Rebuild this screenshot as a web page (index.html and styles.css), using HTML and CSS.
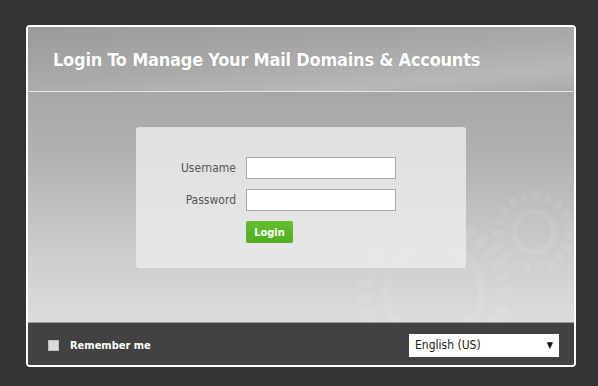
FILE: index.html
```html
<!DOCTYPE html>
<html>
<head>
<meta charset="utf-8">
<link rel="stylesheet" href="styles.css">
</head>
<body>
<div class="card">
  <div class="header">
    <h1 class="title">Login To Manage Your Mail Domains &amp; Accounts</h1>
  </div>
  <div class="body">
    <svg class="gears" width="230" height="150" viewBox="0 0 230 150">
      <g fill="none" stroke="#ffffff" stroke-opacity="0.08">
        <circle cx="90" cy="120" r="70" stroke-width="14" stroke-dasharray="8 6"/>
        <circle cx="90" cy="120" r="48" stroke-width="8"/>
        <circle cx="190" cy="60" r="36" stroke-width="10" stroke-dasharray="7 5"/>
        <circle cx="190" cy="60" r="20" stroke-width="6"/>
      </g>
    </svg>
    <div class="panel">
      <div class="row">
        <label class="label">Username</label>
        <input class="field" type="text">
      </div>
      <div class="row">
        <label class="label">Password</label>
        <input class="field" type="password">
      </div>
      <div class="row">
        <span class="label"></span>
        <button class="btn">Login</button>
      </div>
    </div>
  </div>
  <div class="footer">
    <label class="remember"><span class="check"></span>Remember me</label>
    <div class="select"><span>English (US)</span><span class="arrow">▼</span></div>
  </div>
</div>
</body>
</html>
```
FILE: styles.css
```css
html, body {
  margin: 0;
  padding: 0;
  background: #333333;
  font-family: "DejaVu Sans", "Liberation Sans", sans-serif;
}
body {
  padding: 25px 22px 0 26px;
}
.card {
  width: 546px;
  height: 338px;
  border: 2px solid #ffffff;
  border-radius: 4px;
  overflow: hidden;
  display: flex;
  flex-direction: column;
  background: #444;
}
.header {
  height: 64px;
  flex: none;
  border-bottom: 1px solid #e6e6e6;
  background: linear-gradient(175deg, #9a9a9a 0%, #a9a9a9 50%, #b8b8b8 80%, #aaaaaa 100%);
  display: flex;
  align-items: center;
  padding-left: 25px;
}
.title {
  margin: 0;
  color: #ffffff;
  font-family: "DejaVu Sans Condensed", "DejaVu Sans", sans-serif;
  font-weight: bold;
  font-size: 18px;
  letter-spacing: -0.22px;
  text-shadow: 0 0 1px rgba(0,0,0,0.15);
  padding-top: 0;
}
.body {
  position: relative;
  height: 231px;
  flex: none;
  background: linear-gradient(180deg, #a7a7a7 0%, #b2b2b2 30%, #cccccc 70%, #dcdcdc 100%);
  border-bottom: 1px solid #9a9a9a;
  display: flex;
  justify-content: flex-start;
  padding-top: 35px;
  padding-left: 108px;
  box-sizing: border-box;
}
.gears {
  position: absolute;
  right: 0;
  bottom: 0;
}
.panel {
  position: relative;
  width: 330px;
  height: 141px;
  background: rgba(236,236,236,0.82);
  border-radius: 3px;
  padding-top: 30px;
  box-sizing: border-box;
  display: flex;
  flex-direction: column;
  gap: 10px;
}
.row {
  display: flex;
  align-items: center;
  gap: 10px;
  height: 22px;
}
.label {
  width: 100px;
  text-align: right;
  font-size: 12px;
  color: #555555;
  font-family: "DejaVu Sans Condensed", "DejaVu Sans", sans-serif;
}
.field {
  width: 150px;
  height: 22px;
  box-sizing: border-box;
  margin: 0;
  border: 1px solid #a8a8a8;
  background: #ffffff;
  padding: 0 4px;
}
.btn {
  width: 47px;
  height: 22px;
  margin: 0;
  border: none;
  border-radius: 2px;
  background: linear-gradient(180deg, #64c02e, #52ad22);
  color: #ffffff;
  font-weight: bold;
  font-size: 11px;
  font-family: "DejaVu Sans Condensed", "DejaVu Sans", sans-serif;
  padding: 0;
}
.footer {
  flex: 1;
  background: #424242;
  display: flex;
  align-items: center;
  justify-content: space-between;
  padding: 2px 15px 0 20px;
}
.remember {
  display: flex;
  align-items: center;
  color: #ffffff;
  font-weight: bold;
  font-size: 11px;
  font-family: "DejaVu Sans Condensed", "DejaVu Sans", sans-serif;
}
.check {
  width: 11px;
  height: 11px;
  background: #dcdcdc;
  border: 1px solid #bdbdbd;
  box-sizing: border-box;
  margin-right: 11px;
}
.select {
  width: 150px;
  height: 23px;
  background: #ffffff;
  box-sizing: border-box;
  display: flex;
  align-items: center;
  justify-content: space-between;
  padding: 0 6px;
  font-size: 12px;
  color: #222;
  font-family: "DejaVu Sans Condensed", "DejaVu Sans", sans-serif;
}
.arrow {
  font-size: 9px;
  color: #111;
}
```
